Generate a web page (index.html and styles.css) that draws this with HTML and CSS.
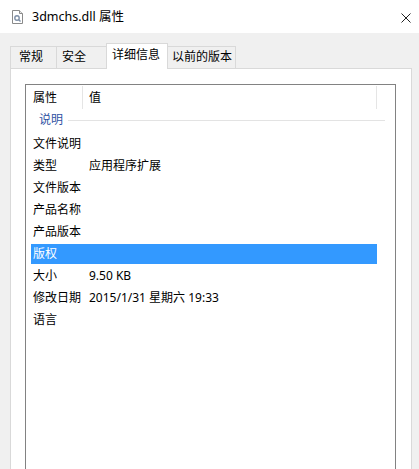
FILE: index.html
```html
<!DOCTYPE html>
<html lang="zh-CN">
<head>
<meta charset="utf-8">
<title>3dmchs.dll 属性</title>
<link rel="stylesheet" href="styles.css">
</head>
<body>
<div class="window">
  <div class="titlebar">
    <svg class="file-icon" width="11" height="14" viewBox="0 0 11 14">
      <path d="M0.5 0.5 H7.5 L10.5 3.5 V13.5 H0.5 Z" fill="#fff" stroke="#8a8a8a"/>
      <path d="M7.5 0.5 V3.5 H10.5" fill="#e8e8e8" stroke="#8a8a8a"/>
      <circle cx="5" cy="8" r="2.2" fill="none" stroke="#7f8fa6" stroke-width="1.4"/>
      <path d="M6.5 9.5 L8.5 11.5" stroke="#7f8fa6" stroke-width="1.4"/>
    </svg>
    <span class="title">3dmchs.dll 属性</span>
    <svg class="close" width="10" height="10" viewBox="0 0 10 10">
      <path d="M0.5 0.5 L9.5 9.5 M9.5 0.5 L0.5 9.5" stroke="#222" stroke-width="1"/>
    </svg>
  </div>
  <div class="client">
    <div class="tabs">
      <div class="tab t1">常规</div>
      <div class="tab t2">安全</div>
      <div class="tab active">详细信息</div>
      <div class="tab t4">以前的版本</div>
    </div>
    <div class="panel">
      <div class="listview">
        <div class="header">
          <div class="hcol c1">属性</div>
          <div class="hcol c2">值</div>
          <div class="hcol c3"></div>
        </div>
        <div class="group"><span class="gtext">说明</span><span class="gline"></span></div>
        <div class="row"><span class="k">文件说明</span><span class="v"></span></div>
        <div class="row"><span class="k">类型</span><span class="v">应用程序扩展</span></div>
        <div class="row"><span class="k">文件版本</span><span class="v"></span></div>
        <div class="row"><span class="k">产品名称</span><span class="v"></span></div>
        <div class="row"><span class="k">产品版本</span><span class="v"></span></div>
        <div class="row selected"><span class="k">版权</span><span class="v"></span></div>
        <div class="row"><span class="k">大小</span><span class="v">9.50 KB</span></div>
        <div class="row"><span class="k">修改日期</span><span class="v">2015/1/31 星期六 19:33</span></div>
        <div class="row"><span class="k">语言</span><span class="v"></span></div>
      </div>
    </div>
  </div>
</div>
</body>
</html>
```
FILE: styles.css
```css
html, body {
  margin: 0;
  padding: 0;
}
body {
  width: 419px;
  height: 469px;
  overflow: hidden;
  font-family: "Noto Sans", "Noto Sans CJK SC", sans-serif;
  font-size: 12px;
  color: #000;
  background: #f0f0f0;
}
.window {
  width: 419px;
  height: 469px;
  display: flex;
  flex-direction: column;
}
.titlebar {
  height: 33px;
  flex: none;
  background: #fff;
  display: flex;
  align-items: center;
  padding-left: 12px;
  padding-right: 8px;
  box-sizing: border-box;
}
.file-icon {
  flex: none;
  margin-top: 1px;
}
.title {
  margin-left: 9px;
  font-size: 12.5px;
  line-height: 16px;
  color: #000;
}
.close {
  margin-left: auto;
  margin-top: 2px;
}
.client {
  flex: 1;
  background: #f0f0f0;
  padding: 9px 7px 0 10px;
  display: flex;
  flex-direction: column;
  min-height: 0;
}
.tabs {
  display: flex;
  align-items: flex-end;
  height: 26px;
  flex: none;
  position: relative;
  z-index: 1;
}
.tab {
  box-sizing: border-box;
  height: 22px;
  border: 1px solid #d9d9d9;
  border-bottom: none;
  background: #f0f0f0;
  line-height: 20px;
  white-space: nowrap;
}
.tab + .tab {
  border-left: none;
}
.t1 {
  width: 47px;
  padding-left: 8px;
}
.t2 {
  width: 51px;
  padding-left: 5px;
}
.tab.active {
  width: 62px;
  height: 26px;
  margin-left: -2px;
  margin-bottom: -1px;
  border-left: 1px solid #d9d9d9;
  background: #fff;
  padding-left: 5px;
  line-height: 21px;
}
.t4 {
  width: 68px;
  padding-left: 4px;
}
.panel {
  flex: 1;
  background: #fff;
  border: 1px solid #d9d9d9;
  border-bottom: none;
  padding: 15px 15px 0 14px;
  min-height: 0;
}
.listview {
  border: 1px solid #828282;
  border-bottom: none;
  height: 400px;
  box-sizing: border-box;
  background: #fff;
}
.header {
  display: flex;
  height: 24px;
}
.hcol {
  box-sizing: border-box;
  line-height: 23px;
  border-right: 1px solid #e5e5e5;
  margin-top: 1px;
  height: 23px;
}
.c1 {
  width: 57px;
  padding-left: 7px;
}
.c2 {
  width: 294px;
  padding-left: 6px;
}
.c3 {
  border-right: none;
}
.group {
  display: flex;
  align-items: center;
  box-sizing: border-box;
  height: 24px;
  padding: 0 10px 2px 13px;
}
.gtext {
  color: #2f52a3;
  line-height: 16px;
}
.gline {
  flex: 1;
  height: 1px;
  background: #e3e3e3;
  margin-left: 5px;
  margin-top: 1px;
}
.row {
  display: flex;
  box-sizing: border-box;
  height: 22px;
  border-top: 1px solid transparent;
  border-bottom: 1px solid transparent;
  background-clip: padding-box;
  margin: 0 18px 0 5px;
  line-height: 20px;
  padding-left: 2px;
  white-space: nowrap;
}
.row .k {
  width: 56px;
  flex: none;
}
.row.selected {
  background-color: #3399ff;
  color: #fff;
}
```
